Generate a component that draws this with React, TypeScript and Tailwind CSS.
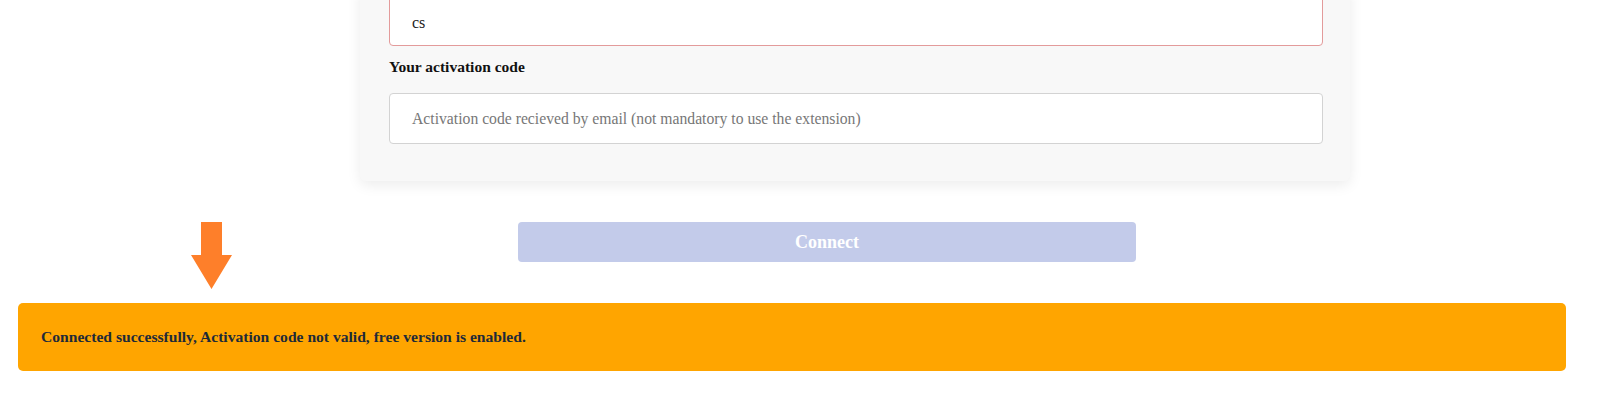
export default function App() {
  return (
    <div
      className="h-[414px] w-full overflow-hidden bg-white"
      style={{ fontFamily: '"Liberation Serif", "Times New Roman", serif' }}
    >
      {/* Settings card (page is scrolled, top of card cut off) */}
      <div className="-mt-[14px] ml-[360px] w-[990px] rounded-b-md bg-[#f8f8f8] pb-[37px] pl-[29px] pr-[27px] pt-0 shadow-[0_4px_14px_rgba(0,0,0,0.08)]">
        <div className="flex h-[60px] items-center rounded border border-[#e39b9b] bg-white px-[22px] pt-[14px] text-[16px] text-[#222]">
          cs
        </div>
        <label className="mt-[11px] block text-[15.5px] font-bold leading-[20px] text-[#111]">
          Your activation code
        </label>
        <div className="mt-[16px] flex h-[51px] items-center rounded border border-[#d3d3d3] bg-white px-[22px] text-[15.7px] text-[#777]">
          Activation code recieved by email (not mandatory to use the extension)
        </div>
      </div>

      {/* Arrow + connect button */}
      <div className="mt-[40px] flex items-start">
        <svg width="42" height="68" viewBox="0 0 42 68" className="ml-[191px] mt-[1px] shrink-0">
          <path d="M10 0 H31 V33 H41 L20.5 67 L0 33 H10 Z" fill="#fe7f2a" />
        </svg>
        <button className="ml-[285px] mt-[1px] h-[40px] w-[618px] rounded-sm bg-[#c3cbea] text-[18px] font-bold text-white">
          Connect
        </button>
      </div>

      {/* Status banner */}
      <div className="ml-[18px] mt-[13px] flex h-[68px] w-[1548px] items-center rounded-[5px] bg-[#ffa500] px-[23px] text-[15.6px] font-bold text-[#1e2a38]">
        Connected successfully, Activation code not valid, free version is enabled.
      </div>
    </div>
  );
}
